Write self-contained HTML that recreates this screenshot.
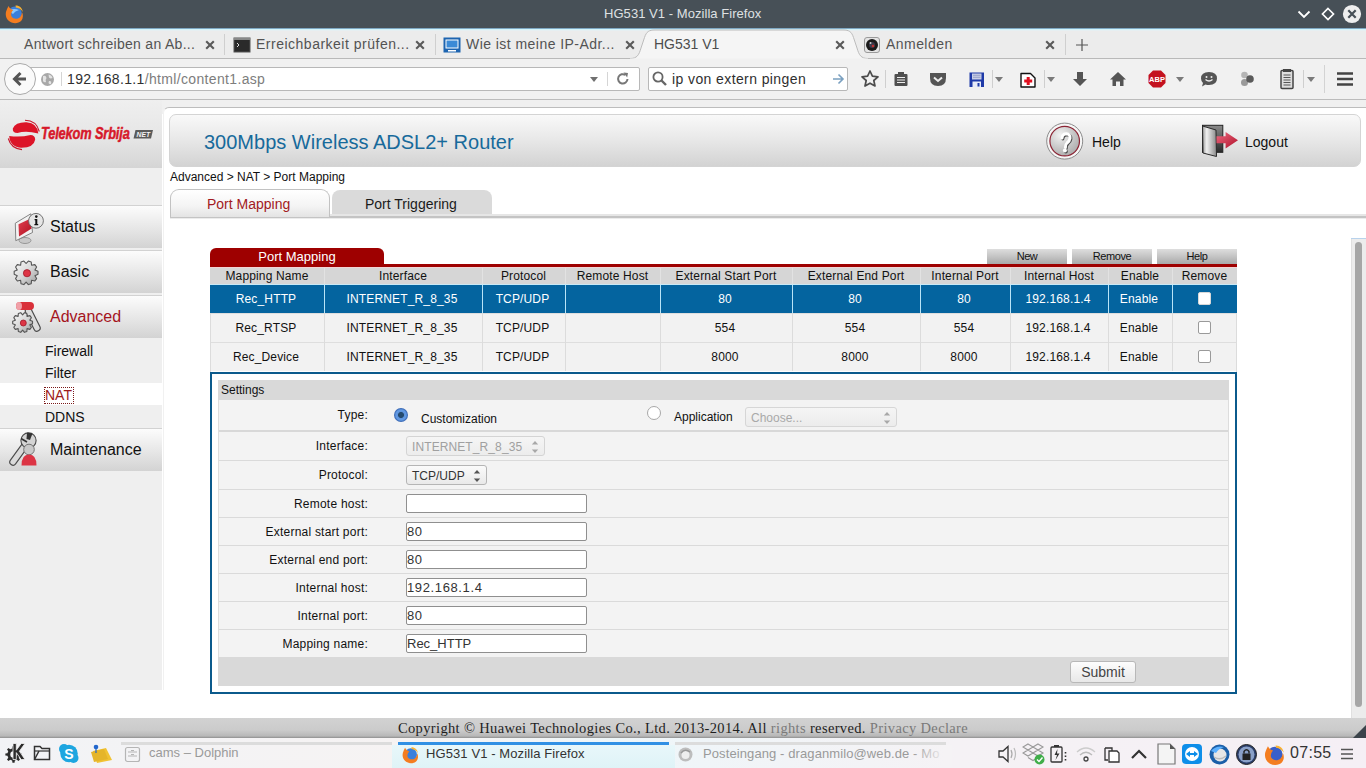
<!DOCTYPE html>
<html><head><meta charset="utf-8">
<style>
*{margin:0;padding:0;box-sizing:border-box}
html,body{width:1366px;height:768px;overflow:hidden;background:#fff;font-family:"Liberation Sans",sans-serif;position:relative}
.a{position:absolute}
.t{position:absolute;white-space:nowrap;line-height:1}
/* title bar */
#title{left:0;top:0;width:1366px;height:28px;background:#475057}
#tline{left:0;top:28px;width:1366px;height:3px;background:linear-gradient(#7fa9c4 0,#7fa9c4 33%,#d4f4fa 33%,#d4f4fa 66%,#e6eff2 66%)}
#tabbar{left:0;top:29px;width:1366px;height:29px;background:#ececec}
#tabline{left:0;top:58px;width:1366px;height:1px;background:#b9b9b9}
#navbar{left:0;top:59px;width:1366px;height:40px;background:#f1f1f1}
#navline{left:0;top:99px;width:1366px;height:1px;background:#bcbcbc}
.tabt{font-size:14px;color:#535353;top:37px}
.tabx{font-size:15px;color:#555;top:36px;font-weight:bold}
.sep{width:1px;background:#cfcfcf}
/*css2*/
.nav{left:0;width:162px;height:43px;background:linear-gradient(#fcfcfc,#e6e6e6 55%,#d3d3d3);border-top:1px solid #d2d2d2}
.navt{left:50px;font-size:16px;color:#111}
.subt{left:45px;font-size:14px;color:#111}
.btn{top:249px;width:80px;height:15px;background:linear-gradient(#dedede,#c4c4c4 50%,#a9a9a9)}
.btnt{top:251px;width:80px;text-align:center;font-size:11px;color:#111;letter-spacing:-0.45px}
.th{top:270px;text-align:center;font-size:12px;color:#111;letter-spacing:0.15px}
.td{text-align:center;font-size:12px;letter-spacing:0.15px;margin-left:-1px}
.lbl{right:998px;font-size:12px;color:#111;text-align:right;letter-spacing:0.22px}
.sel{border:1px solid #bbb;border-radius:3px}
.inp{left:406px;width:181px;height:19px;background:#fff;border:1px solid #8f8f8f;border-radius:2px}
.inpt{left:407px;font-size:13px;color:#333}
/*end2*/
</style></head><body>
<!-- ============ TITLE BAR ============ -->
<div class="a" id="title"></div>
<svg class="a" style="left:4px;top:4px" width="20" height="20" viewBox="0 0 20 20">
 <circle cx="10.8" cy="9.6" r="7" fill="#3a7fdc"/>
 <path d="M6 6 Q10 4 15 6 Q11 7 9 10 Q7 9 6 6 Z" fill="#8cc8ff"/>
 <path d="M4.5 2 C5.5 4 7 5.5 9.2 6 C7.2 8 6.6 10.5 7.6 12.6 C9.2 15.2 13.2 15.6 15.7 13.5 C17.2 12 17.9 10 17.9 8 C19.4 10.5 19.3 14.2 17.3 16.7 C14.7 19.6 9.3 20 5.7 17.6 C2.1 15.2 1.2 11 2.1 7.6 C2.7 5.6 3.5 3.6 4.5 2 Z" fill="#f47d20"/>
 <path d="M11.5 1.4 C15.5 1.3 18.3 4 18.9 8 C17.3 5.3 14.7 3.6 11.8 3.4 Z" fill="#f9b233"/>
</svg>
<div class="t" style="left:604px;top:7px;font-size:13px;color:#dfe1e3;letter-spacing:0.05px">HG531 V1 - Mozilla Firefox</div>
<svg class="a" style="left:1296px;top:8px" width="16" height="12" viewBox="0 0 16 12"><path d="M2.5 3.5 L8 9 L13.5 3.5" stroke="#fff" stroke-width="1.8" fill="none"/></svg>
<svg class="a" style="left:1320px;top:6px" width="16" height="16" viewBox="0 0 16 16"><path d="M8 2.5 L13.5 8 L8 13.5 L2.5 8 Z" stroke="#fff" stroke-width="1.7" fill="none"/></svg>
<svg class="a" style="left:1342px;top:4px" width="20" height="20" viewBox="0 0 20 20"><circle cx="10" cy="10" r="9.1" fill="#eeeeee"/><path d="M6.3 6.3 L13.7 13.7 M13.7 6.3 L6.3 13.7" stroke="#475057" stroke-width="2.2"/></svg>

<!-- ============ TAB BAR ============ -->
<div class="a" id="tabbar"></div>
<div class="a" id="tline"></div>
<div class="a" id="tabline"></div>
<div class="t tabt" style="left:24px;letter-spacing:0.3px">Antwort schreiben an Ab...</div>
<svg class="a" style="left:204px;top:39px" width="12" height="12" viewBox="0 0 12 12"><path d="M2.2 2.2 L9.8 9.8 M9.8 2.2 L2.2 9.8" stroke="#5a5a5a" stroke-width="2.1"/></svg>
<div class="a sep" style="left:224px;top:34px;height:21px"></div>
<svg class="a" style="left:233px;top:37px" width="18" height="16" viewBox="0 0 18 16"><rect x="1" y="1" width="16" height="14" fill="#2a2a2a" stroke="#555" stroke-width="1"/><rect x="1" y="1" width="16" height="2" fill="#888"/><path d="M4 6 L6 8 L4 10" stroke="#ddd" stroke-width="1" fill="none"/></svg>
<div class="t tabt" style="left:256px;letter-spacing:0.5px">Erreichbarkeit prüfen...</div>
<svg class="a" style="left:414px;top:39px" width="12" height="12" viewBox="0 0 12 12"><path d="M2.2 2.2 L9.8 9.8 M9.8 2.2 L2.2 9.8" stroke="#5a5a5a" stroke-width="2.1"/></svg>
<div class="a sep" style="left:435px;top:34px;height:21px"></div>
<svg class="a" style="left:443px;top:37px" width="18" height="16" viewBox="0 0 18 16"><rect x="0.5" y="0.5" width="17" height="15" fill="#1d64b0"/><rect x="2.5" y="2.5" width="13" height="9" fill="#fff"/><rect x="3.5" y="3.5" width="11" height="7" fill="#3b8ad6"/><rect x="5" y="13" width="8" height="1.5" fill="#fff"/></svg>
<div class="t tabt" style="left:466px;letter-spacing:0.45px">Wie ist meine IP-Adr...</div>
<svg class="a" style="left:624px;top:39px" width="12" height="12" viewBox="0 0 12 12"><path d="M2.2 2.2 L9.8 9.8 M9.8 2.2 L2.2 9.8" stroke="#5a5a5a" stroke-width="2.1"/></svg>
<!-- active tab -->
<svg class="a" style="left:630px;top:29px" width="238" height="31" viewBox="0 0 238 31">
 <path d="M0 29.5 C7 29.5 9 26 11 19 L14.5 8.5 C16.5 2.5 19 1 25 1 L213 1 C219 1 221.5 2.5 223.5 8.5 L227 19 C229 26 231 29.5 238 29.5 V31 H0 Z" fill="#f5f5f5" stroke="#bcbcbc" stroke-width="1"/>
 <rect x="0" y="29.5" width="238" height="2" fill="#f1f1f1"/>
</svg>
<div class="t tabt" style="left:654px;color:#4d4d4d;letter-spacing:0px">HG531 V1</div>
<svg class="a" style="left:834px;top:39px" width="12" height="12" viewBox="0 0 12 12"><path d="M2.2 2.2 L9.8 9.8 M9.8 2.2 L2.2 9.8" stroke="#5a5a5a" stroke-width="2.1"/></svg>
<svg class="a" style="left:863px;top:36px" width="18" height="18" viewBox="0 0 18 18"><rect x="1.5" y="1.5" width="15" height="15" rx="2.5" fill="#e4e4e4" stroke="#9a9a9a" stroke-width="1"/><circle cx="9" cy="9" r="6" fill="#1a1a1a"/><circle cx="9" cy="9" r="3" fill="#3a3a4a"/><circle cx="10" cy="10" r="1.3" fill="#c03030"/><circle cx="7.5" cy="7" r="1" fill="#ccc"/></svg>
<div class="t tabt" style="left:886px;letter-spacing:0.45px">Anmelden</div>
<svg class="a" style="left:1044px;top:39px" width="12" height="12" viewBox="0 0 12 12"><path d="M2.2 2.2 L9.8 9.8 M9.8 2.2 L2.2 9.8" stroke="#5a5a5a" stroke-width="2.1"/></svg>
<div class="a sep" style="left:1065px;top:34px;height:21px"></div>
<svg class="a" style="left:1075px;top:38px" width="14" height="14" viewBox="0 0 14 14"><path d="M7 1 V13 M1 7 H13" stroke="#555" stroke-width="1.2"/></svg>

<!-- ============ NAV BAR ============ -->
<div class="a" id="navbar"></div>
<div class="a" id="navline"></div>
<div class="a" style="left:28px;top:67px;width:612px;height:24px;background:#fff;border:1px solid #b8b8b8;border-radius:2px"></div>
<div class="a" style="left:4px;top:63px;width:32px;height:32px;border-radius:50%;background:#fafafa;border:1px solid #a9a9a9"></div>
<svg class="a" style="left:11px;top:70px" width="18" height="18" viewBox="0 0 18 18"><path d="M9.5 3 L3.5 9 L9.5 15 M3.5 9 H15" stroke="#555" stroke-width="3" fill="none" stroke-linejoin="miter"/></svg>
<svg class="a" style="left:40px;top:72px" width="15" height="15" viewBox="0 0 15 15"><circle cx="7.5" cy="7.5" r="6.5" fill="#a8a8a8"/><path d="M3 4 Q6 3 6.5 6 Q5 8 6 10 Q4 11 3 9 Z M8.5 2.5 Q12 3 12.5 6 Q10.5 7 9 5.5 Z M9 9 Q12 8.5 11 12 Q9 12.5 8.5 11 Z" fill="#e3e3e3"/></svg>
<div class="a sep" style="left:61px;top:72px;height:14px;background:#d5d5d5"></div>
<div class="t" style="left:67px;top:72px;font-size:14px;color:#2f2f2f;letter-spacing:0.34px">192.168.1.1<span style="color:#7d7d7d">/html/content1.asp</span></div>
<svg class="a" style="left:588px;top:74px" width="12" height="10" viewBox="0 0 12 10"><path d="M2 3 L10 3 L6 8 Z" fill="#707070"/></svg>
<div class="a sep" style="left:607px;top:72px;height:14px;background:#d5d5d5"></div>
<svg class="a" style="left:615px;top:71px" width="16" height="16" viewBox="0 0 16 16"><path d="M12.5 8 A4.7 4.7 0 1 1 10.5 4" stroke="#777" stroke-width="2" fill="none"/><path d="M8.5 1.5 L13 2 L12.2 6.5 Z" fill="#777"/></svg>
<!-- search -->
<div class="a" style="left:648px;top:67px;width:200px;height:24px;background:#fff;border:1px solid #b8b8b8;border-radius:2px"></div>
<svg class="a" style="left:651px;top:70px" width="18" height="18" viewBox="0 0 18 18"><circle cx="7" cy="7" r="4.6" stroke="#666" stroke-width="1.8" fill="none"/><path d="M10.5 10.5 L15 15" stroke="#666" stroke-width="2.4"/></svg>
<div class="t" style="left:672px;top:72px;font-size:14px;color:#2f2f2f;letter-spacing:0.4px">ip von extern pingen</div>
<svg class="a" style="left:831px;top:72px" width="14" height="14" viewBox="0 0 14 14"><path d="M2 7 H12 M7.5 2.5 L12 7 L7.5 11.5" stroke="#7aa0c0" stroke-width="1.6" fill="none"/></svg>
<!-- toolbar icons -->
<svg class="a" style="left:860px;top:69px" width="20" height="20" viewBox="0 0 20 20"><path d="M10 2 L12.4 7.2 L18 7.8 L13.8 11.5 L15 17 L10 14.2 L5 17 L6.2 11.5 L2 7.8 L7.6 7.2 Z" stroke="#4c4c4c" stroke-width="1.7" fill="none" stroke-linejoin="round"/></svg>
<div class="a sep" style="left:885px;top:70px;height:18px;background:#cfcfcf"></div>
<svg class="a" style="left:892px;top:70px" width="18" height="18" viewBox="0 0 18 18"><rect x="2.5" y="4" width="13" height="12" rx="1" fill="#4f4f4f"/><rect x="6" y="2" width="6" height="3" fill="#4f4f4f"/><path d="M5 7.5 H13 M5 10 H13 M5 12.5 H13" stroke="#eee" stroke-width="1"/></svg>
<svg class="a" style="left:928px;top:69px" width="20" height="20" viewBox="0 0 20 20"><path d="M2 4 H18 V9 Q18 17 10 17 Q2 17 2 9 Z" fill="#555"/><path d="M6 8.5 L10 12 L14 8.5" stroke="#eee" stroke-width="2" fill="none"/></svg>
<svg class="a" style="left:968px;top:71px" width="18" height="18" viewBox="0 0 18 18"><rect x="1.5" y="1.5" width="14.5" height="14.5" fill="#1f3aa8"/><rect x="4" y="2.5" width="9.5" height="6" fill="#c9cfe6"/><path d="M5 4.3 H12.5 M5 6.3 H12.5" stroke="#8a94c0" stroke-width="0.8"/><rect x="4.5" y="10.5" width="8.5" height="5.5" fill="#e8ecf8"/><rect x="9.5" y="12" width="2" height="3.5" fill="#1f3aa8"/></svg>
<div class="a sep" style="left:992px;top:70px;height:18px;background:#cfcfcf"></div>
<svg class="a" style="left:993px;top:75px" width="12" height="10" viewBox="0 0 12 10"><path d="M2 2 L10 2 L6 7 Z" fill="#7a7a7a"/></svg>
<svg class="a" style="left:1019px;top:71px" width="18" height="18" viewBox="0 0 18 18"><path d="M2 2.5 H11.5 L16 7 V16 H2 Z" fill="#fff" stroke="#111" stroke-width="1.4" stroke-linejoin="round"/><path d="M9.2 6 V14 M5.2 10 H13.2" stroke="#e01020" stroke-width="3"/></svg>
<div class="a sep" style="left:1044px;top:70px;height:18px;background:#cfcfcf"></div>
<svg class="a" style="left:1045px;top:75px" width="12" height="10" viewBox="0 0 12 10"><path d="M2 2 L10 2 L6 7 Z" fill="#7a7a7a"/></svg>
<svg class="a" style="left:1071px;top:70px" width="18" height="18" viewBox="0 0 18 18"><path d="M6 2 H12 V9 H16 L9 16 L2 9 H6 Z" fill="#555"/></svg>
<svg class="a" style="left:1109px;top:70px" width="18" height="18" viewBox="0 0 18 18"><path d="M9 2 L17 9.5 H14.5 V16 H11 V11.5 H7 V16 H3.5 V9.5 H1 Z" fill="#555"/></svg>
<svg class="a" style="left:1147px;top:69px" width="20" height="20" viewBox="0 0 20 20"><path d="M6 1.5 H14 L18.5 6 V14 L14 18.5 H6 L1.5 14 V6 Z" fill="#c4121f"/><text x="10" y="13.3" font-family="Liberation Sans" font-size="7.5" font-weight="bold" fill="#fff" text-anchor="middle">ABP</text></svg>
<svg class="a" style="left:1174px;top:75px" width="12" height="10" viewBox="0 0 12 10"><path d="M2 2 L10 2 L6 7 Z" fill="#7a7a7a"/></svg>
<svg class="a" style="left:1199px;top:69px" width="20" height="20" viewBox="0 0 20 20"><path d="M10 3 Q18 3 18 9.5 Q18 16 10 16 Q8 16 6.5 15.5 L3 17.5 L4 14 Q2 12 2 9.5 Q2 3 10 3 Z" fill="#555"/><path d="M6.5 10.5 Q10 13.5 13.5 10.5" stroke="#eee" stroke-width="1.3" fill="none"/><circle cx="7.5" cy="8" r="1" fill="#eee"/><circle cx="12.5" cy="8" r="1" fill="#eee"/></svg>
<svg class="a" style="left:1237px;top:69px" width="20" height="20" viewBox="0 0 20 20"><circle cx="7.5" cy="6" r="3.3" fill="#b5b5b5"/><circle cx="7.5" cy="13.5" r="3.5" fill="#9a9a9a"/><circle cx="13" cy="10" r="3.8" fill="#5a5a5a"/></svg>
<svg class="a" style="left:1278px;top:68px" width="18" height="22" viewBox="0 0 18 22"><rect x="3" y="2.5" width="12" height="18" rx="1" fill="#ddd" stroke="#444" stroke-width="1.5"/><path d="M5.5 7 H12.5 M5.5 9.5 H12.5 M5.5 12 H12.5 M5.5 14.5 H12.5 M5.5 17 H12.5" stroke="#555" stroke-width="1"/><rect x="5" y="1" width="8" height="3" fill="#444"/></svg>
<div class="a sep" style="left:1303px;top:70px;height:18px;background:#cfcfcf"></div>
<svg class="a" style="left:1305px;top:75px" width="12" height="10" viewBox="0 0 12 10"><path d="M2 2 L10 2 L6 7 Z" fill="#7a7a7a"/></svg>
<div class="a sep" style="left:1324px;top:65px;height:28px;background:#d3d3d3"></div>
<svg class="a" style="left:1335px;top:70px" width="20" height="18" viewBox="0 0 20 18"><path d="M2 3.5 H18 M2 9 H18 M2 14.5 H18" stroke="#444" stroke-width="2.6"/></svg>
<!-- ============ PAGE ============ -->
<!-- sidebar -->
<div class="a" style="left:0;top:100px;width:162px;height:590px;background:#efefef"></div>
<div class="a" style="left:0;top:100px;width:162px;height:68px;background:linear-gradient(#efefef,#e6e6e6 55%,#d5d5d5)"></div>
<!-- logo -->
<svg class="a" style="left:0;top:100px" width="162" height="68" viewBox="0 0 162 68">
 <path d="M38.3 33.5 Q37.5 23 26.5 22.3 Q15.5 22 12.8 28.5 Q12.5 33 17.5 33 Q26 30.5 38.3 33.5 Z" fill="#dc1428"/>
 <path d="M9.2 36 Q10 47 21.5 47.8 Q34 47.5 35.2 39.5 Q35 35 30.5 35 Q20.5 37.5 9.2 36 Z" fill="#dc1428"/>
 <path d="M25 20.3 Q36.5 20.5 39.3 31.5" stroke="#c8142a" stroke-width="1.1" fill="none"/>
 <path d="M8.3 38.5 Q11 48.5 22 49.6" stroke="#c8142a" stroke-width="1.1" fill="none"/>
 <text transform="translate(41,39) scale(0.755,1)" x="0" y="0" font-family="Liberation Sans" font-size="17" font-weight="bold" font-style="italic" fill="#d7182a" stroke="#d7182a" stroke-width="0.5" letter-spacing="-0.2">Telekom Srbija</text>
 <path d="M135.5 30 H153 L151 38.4 H133.5 Z" fill="#5b5b5b"/>
 <text transform="translate(136.5,37) scale(0.85,1)" x="0" y="0" font-family="Liberation Sans" font-size="8" font-weight="bold" font-style="italic" fill="#f4f4f4">NET</text>
</svg>
<!-- nav rows -->
<div class="a nav" style="top:205px"></div>
<div class="a nav" style="top:250px"></div>
<div class="a nav" style="top:295px"></div>
<div class="a nav" style="top:428px"></div>
<div class="a" style="left:0;top:383px;width:162px;height:22px;background:#fff"></div>
<div class="t navt" style="top:219px">Status</div>
<div class="t navt" style="top:264px">Basic</div>
<div class="t navt" style="top:309px;color:#a5141c">Advanced</div>
<div class="t navt" style="top:442px">Maintenance</div>
<div class="t subt" style="top:344px">Firewall</div>
<div class="t subt" style="top:366px">Filter</div>
<div class="t subt" style="top:388px;color:#9d1a1a;outline:1px dotted #7a1a1a;outline-offset:0px;padding:0 1px 1px 0">NAT</div>
<div class="t subt" style="top:410px">DDNS</div>
<!-- nav icons -->
<svg class="a" style="left:12px;top:210px" width="34" height="36" viewBox="0 0 34 36">
 <defs><linearGradient id="scr" x1="0" y1="0" x2="1" y2="1"><stop offset="0" stop-color="#e04050"/><stop offset="1" stop-color="#b01020"/></linearGradient></defs>
 <ellipse cx="13" cy="30.5" rx="6" ry="3" fill="#c8c8c8" stroke="#888" stroke-width="0.8"/>
 <path d="M3.3 13.2 L18.8 3.8 L20.5 22.5 L3.8 30.7 Z" fill="#f2f2f2" stroke="#777" stroke-width="0.9"/>
 <path d="M6.5 14.3 L17.6 9 L19.6 18.4 L7 26.6 Z" fill="url(#scr)"/>
 <circle cx="24" cy="10.8" r="7.4" fill="#e6e6e6" stroke="#666" stroke-width="0.9"/>
 <circle cx="24.3" cy="6.6" r="1.3" fill="#111"/>
 <path d="M22.6 9 H25.3 V14 H26.2 V15.3 H22.4 V14 H23.3 V10.2 H22.6 Z" fill="#111"/>
</svg>
<svg class="a" style="left:10px;top:256px" width="32" height="34" viewBox="0 0 32 34">
 <defs><linearGradient id="gg" x1="0" y1="0" x2="1" y2="1"><stop offset="0" stop-color="#fafafa"/><stop offset="0.5" stop-color="#d8d8d8"/><stop offset="1" stop-color="#9a9a9a"/></linearGradient></defs>
 <path d="M24.94 13.93 L28.01 15.30 L28.01 18.30 L24.94 19.67 L24.94 19.67 L26.62 22.58 L24.85 25.01 L21.57 24.32 L21.57 24.32 L21.21 27.66 L18.35 28.59 L16.10 26.10 L16.10 26.10 L13.85 28.59 L10.99 27.66 L10.63 24.32 L10.63 24.32 L7.35 25.01 L5.58 22.58 L7.26 19.67 L7.26 19.67 L4.19 18.30 L4.19 15.30 L7.26 13.93 L7.26 13.93 L5.58 11.02 L7.35 8.59 L10.63 9.28 L10.63 9.28 L10.99 5.94 L13.85 5.01 L16.10 7.50 L16.10 7.50 L18.35 5.01 L21.21 5.94 L21.57 9.28 L21.57 9.28 L24.85 8.59 L26.62 11.02 L24.94 13.93 Z" fill="url(#gg)" stroke="#555" stroke-width="1.1" stroke-linejoin="round"/>
 <circle cx="17" cy="17.2" r="3.6" fill="#dd3545" stroke="#a01828" stroke-width="0.8"/>
</svg>
<svg class="a" style="left:9px;top:298px" width="34" height="38" viewBox="0 0 34 38">
 <path d="M19.5 13 L28 30" stroke="#4a4a4a" stroke-width="7.5" stroke-linecap="round"/><path d="M19.5 13 L28 30" stroke="#dcdcdc" stroke-width="5.2" stroke-linecap="round"/>
 <rect x="7" y="4" width="18" height="8" rx="4" fill="#d9303a"/>
 <ellipse cx="10" cy="8" rx="3" ry="4" fill="#f0a0a8"/>
 <path d="M20.83 22.15 L23.52 23.25 L23.52 25.75 L20.83 26.85 L20.83 26.85 L22.36 29.32 L20.89 31.35 L18.07 30.65 L18.07 30.65 L17.86 33.55 L15.47 34.32 L13.60 32.10 L13.60 32.10 L11.73 34.32 L9.34 33.55 L9.13 30.65 L9.13 30.65 L6.31 31.35 L4.84 29.32 L6.37 26.85 L6.37 26.85 L3.68 25.75 L3.68 23.25 L6.37 22.15 L6.37 22.15 L4.84 19.68 L6.31 17.65 L9.13 18.35 L9.13 18.35 L9.34 15.45 L11.73 14.68 L13.60 16.90 L13.60 16.90 L15.47 14.68 L17.86 15.45 L18.07 18.35 L18.07 18.35 L20.89 17.65 L22.36 19.68 L20.83 22.15 Z" fill="url(#gg)" stroke="#555" stroke-width="1.1" stroke-linejoin="round"/>
 <circle cx="14.3" cy="25" r="3" fill="#dd3545" stroke="#a01828" stroke-width="0.8"/>
</svg>
<svg class="a" style="left:8px;top:431px" width="34" height="40" viewBox="0 0 34 40">
 <path d="M18 13 L5 31" stroke="#4a4a4a" stroke-width="7.5" stroke-linecap="round"/>
 <path d="M18 13 L5 31" stroke="#dadada" stroke-width="5.2" stroke-linecap="round"/>
 <circle cx="20.5" cy="9.5" r="7.6" fill="#d4d4d4" stroke="#4a4a4a" stroke-width="1.1"/>
 <path d="M19 1.5 L24.5 2.5 L22 9 L18.5 8 Z" fill="#333"/>
 <path d="M13 7.5 L19 11" stroke="#333" stroke-width="1.6"/>
 <circle cx="21" cy="18.5" r="5.3" fill="#c9c9c9" stroke="#6a6a6a" stroke-width="0.9"/>
 <path d="M13.5 34.5 Q13.5 23.5 21 23.5 Q28.5 23.5 28.5 34.5 Z" fill="#dc3444"/>
</svg>
<!-- main frame -->
<div class="a" style="left:162px;top:100px;width:1204px;height:14px;background:#f0f0f0"></div>
<div class="a" style="left:163px;top:107px;width:1220px;height:700px;border:1px solid #f1f1f1;border-top:1.5px solid #bdbdbd;border-radius:6px 0 0 0;background:#fff"></div>
<div class="a" style="left:169px;top:114px;width:1192px;height:53px;border:1px solid #d4d4d4;border-radius:7px;background:linear-gradient(#f9f9f9,#e9e9e9 45%,#d3d3d3)"></div>
<div class="t" style="left:204px;top:132px;font-size:20px;color:#176a9b">300Mbps Wireless ADSL2+ Router</div>
<!-- help icon -->
<svg class="a" style="left:1045px;top:121px" width="40" height="40" viewBox="0 0 40 40">
 <defs><radialGradient id="hg" cx="0.35" cy="0.3" r="0.8"><stop offset="0" stop-color="#f2f2f2"/><stop offset="0.6" stop-color="#c4c4c4"/><stop offset="1" stop-color="#a8a8a8"/></radialGradient></defs>
 <circle cx="19.7" cy="20.1" r="18" fill="#f6f6f6" stroke="#8a8a8a" stroke-width="1"/>
 <circle cx="19.7" cy="20.1" r="14.8" fill="url(#hg)" stroke="#8c2434" stroke-width="1.2"/>
 <path d="M17 17 Q17.5 12.8 21.3 12.8 Q25.5 13.2 25 17.2 Q24.6 20 22 22 Q20.2 23.6 20.4 26.5" stroke="#4a4a4a" stroke-width="3" fill="none" stroke-linecap="round" transform="translate(0.9,0.9)"/>
 <circle cx="20.8" cy="30.4" r="2" fill="#4a4a4a"/>
 <path d="M17 17 Q17.5 12.8 21.3 12.8 Q25.5 13.2 25 17.2 Q24.6 20 22 22 Q20.2 23.6 20.4 26.5" stroke="#ffffff" stroke-width="3" fill="none" stroke-linecap="round"/>
 <circle cx="19.9" cy="29.5" r="2" fill="#ffffff"/>
</svg>
<div class="t" style="left:1092px;top:135px;font-size:14px;color:#111">Help</div>
<!-- logout icon -->
<svg class="a" style="left:1198px;top:121px" width="42" height="40" viewBox="0 0 42 40">
 <defs><linearGradient id="dg" x1="0" x2="1"><stop offset="0" stop-color="#9a9a9a"/><stop offset="0.3" stop-color="#f0f0f0"/><stop offset="1" stop-color="#8a8a8a"/></linearGradient>
 <linearGradient id="fg" x1="0" y1="0" x2="0" y2="1"><stop offset="0" stop-color="#8a8a8a"/><stop offset="1" stop-color="#2a2a2a"/></linearGradient>
 <linearGradient id="ag" x1="0" y1="0" x2="1" y2="1"><stop offset="0" stop-color="#ec6a80"/><stop offset="1" stop-color="#b0102a"/></linearGradient></defs>
 <rect x="4.5" y="4.3" width="20.3" height="27" fill="url(#fg)" stroke="#222" stroke-width="1"/>
 <path d="M4.5 5 L18 9 L18.5 35.5 L5 32 Z" fill="url(#dg)" stroke="#2a2a2a" stroke-width="1"/>
 <path d="M18.5 15.2 H27.6 V11 L40 19.3 L27.6 27.5 V22.3 H18.5 Z" fill="url(#ag)"/>
</svg>
<div class="t" style="left:1245px;top:135px;font-size:14px;color:#111">Logout</div>
<!-- breadcrumb -->
<div class="t" style="left:170px;top:171px;font-size:12px;color:#111">Advanced &gt; NAT &gt; Port Mapping</div>
<!-- tabs -->
<div class="a" style="left:170px;top:214px;width:1196px;height:2px;background:#e6e6e6"></div>
<div class="a" style="left:170px;top:216px;width:1196px;height:2px;background:#c4c4c4"></div>
<div class="a" style="left:170px;top:218px;width:1196px;height:1px;background:#ececec"></div>
<div class="a" style="left:332px;top:190px;width:160px;height:24px;background:#dadada;border-radius:8px 8px 0 0"></div>
<div class="a" style="left:170px;top:189px;width:160px;height:28px;border:1px solid #c2c2c2;border-bottom:none;border-radius:9px 9px 0 0;background:linear-gradient(#ffffff,#f4f4f4 60%,#e4e4e4)"></div>
<div class="t" style="left:207px;top:197px;font-size:14px;color:#a21a22">Port Mapping</div>
<div class="t" style="left:365px;top:197px;font-size:14px;color:#1a1a1a">Port Triggering</div>
<!-- ============ TABLE ============ -->
<div class="a" style="left:210px;top:248px;width:174px;height:18px;background:#9e0000;border-radius:6px 6px 0 0"></div>
<div class="t" style="left:210px;width:174px;text-align:center;top:250px;font-size:13px;color:#fff">Port Mapping</div>
<div class="a btn" style="left:987px"></div><div class="t btnt" style="left:987px">New</div>
<div class="a btn" style="left:1072px"></div><div class="t btnt" style="left:1072px">Remove</div>
<div class="a btn" style="left:1157px"></div><div class="t btnt" style="left:1157px">Help</div>
<div class="a" style="left:210px;top:264px;width:1027px;height:3px;background:#9e0000"></div>
<div class="a" style="left:210px;top:267px;width:1027px;height:17px;background:#d6d6d6"></div>
<div class="a" style="left:210px;top:267px;width:1027px;height:1px;background:#f2d4d4"></div>
<div class="a" style="left:210px;top:284px;width:1027px;height:1px;background:#c9e9f6"></div>
<div class="t th" style="left:210px;width:114px">Mapping Name</div>
<div class="a" style="left:324px;top:268px;width:1px;height:16px;background:#e2e2e2"></div>
<div class="t th" style="left:324px;width:158px">Interface</div>
<div class="a" style="left:482px;top:268px;width:1px;height:16px;background:#e2e2e2"></div>
<div class="t th" style="left:482px;width:83px">Protocol</div>
<div class="a" style="left:565px;top:268px;width:1px;height:16px;background:#e2e2e2"></div>
<div class="t th" style="left:565px;width:95px">Remote Host</div>
<div class="a" style="left:660px;top:268px;width:1px;height:16px;background:#e2e2e2"></div>
<div class="t th" style="left:660px;width:132px">External Start Port</div>
<div class="a" style="left:792px;top:268px;width:1px;height:16px;background:#e2e2e2"></div>
<div class="t th" style="left:792px;width:128px">External End Port</div>
<div class="a" style="left:920px;top:268px;width:1px;height:16px;background:#e2e2e2"></div>
<div class="t th" style="left:920px;width:90px">Internal Port</div>
<div class="a" style="left:1010px;top:268px;width:1px;height:16px;background:#e2e2e2"></div>
<div class="t th" style="left:1010px;width:98px">Internal Host</div>
<div class="a" style="left:1108px;top:268px;width:1px;height:16px;background:#e2e2e2"></div>
<div class="t th" style="left:1108px;width:64px">Enable</div>
<div class="a" style="left:1172px;top:268px;width:1px;height:16px;background:#e2e2e2"></div>
<div class="t th" style="left:1172px;width:65px">Remove</div>
<div class="a" style="left:210px;top:285px;width:1027px;height:28px;background:#04649f"></div>
<div class="t td" style="left:210px;width:114px;top:293px;color:#fff">Rec_HTTP</div>
<div class="a" style="left:324px;top:285px;width:1px;height:28px;background:#b9e4f7"></div>
<div class="t td" style="left:324px;width:158px;top:293px;color:#fff">INTERNET_R_8_35</div>
<div class="a" style="left:482px;top:285px;width:1px;height:28px;background:#b9e4f7"></div>
<div class="t td" style="left:482px;width:83px;top:293px;color:#fff">TCP/UDP</div>
<div class="a" style="left:565px;top:285px;width:1px;height:28px;background:#b9e4f7"></div>
<div class="a" style="left:660px;top:285px;width:1px;height:28px;background:#b9e4f7"></div>
<div class="t td" style="left:660px;width:132px;top:293px;color:#fff">80</div>
<div class="a" style="left:792px;top:285px;width:1px;height:28px;background:#b9e4f7"></div>
<div class="t td" style="left:792px;width:128px;top:293px;color:#fff">80</div>
<div class="a" style="left:920px;top:285px;width:1px;height:28px;background:#b9e4f7"></div>
<div class="t td" style="left:920px;width:90px;top:293px;color:#fff">80</div>
<div class="a" style="left:1010px;top:285px;width:1px;height:28px;background:#b9e4f7"></div>
<div class="t td" style="left:1010px;width:98px;top:293px;color:#fff">192.168.1.4</div>
<div class="a" style="left:1108px;top:285px;width:1px;height:28px;background:#b9e4f7"></div>
<div class="t td" style="left:1108px;width:64px;top:293px;color:#fff">Enable</div>
<div class="a" style="left:1172px;top:285px;width:1px;height:28px;background:#b9e4f7"></div>
<div class="a" style="left:1198px;top:292px;width:13px;height:13px;background:#fff;border-radius:2px;border:1px solid #d8d8d8"></div>
<div class="a" style="left:210px;top:313px;width:1027px;height:29px;background:#f2f2f2"></div>
<div class="a" style="left:210px;top:313px;width:1027px;height:1px;background:#dedede"></div>
<div class="t td" style="left:210px;width:114px;top:322px;color:#111">Rec_RTSP</div>
<div class="a" style="left:324px;top:313px;width:1px;height:29px;background:#dcdcdc"></div>
<div class="t td" style="left:324px;width:158px;top:322px;color:#111">INTERNET_R_8_35</div>
<div class="a" style="left:482px;top:313px;width:1px;height:29px;background:#dcdcdc"></div>
<div class="t td" style="left:482px;width:83px;top:322px;color:#111">TCP/UDP</div>
<div class="a" style="left:565px;top:313px;width:1px;height:29px;background:#dcdcdc"></div>
<div class="a" style="left:660px;top:313px;width:1px;height:29px;background:#dcdcdc"></div>
<div class="t td" style="left:660px;width:132px;top:322px;color:#111">554</div>
<div class="a" style="left:792px;top:313px;width:1px;height:29px;background:#dcdcdc"></div>
<div class="t td" style="left:792px;width:128px;top:322px;color:#111">554</div>
<div class="a" style="left:920px;top:313px;width:1px;height:29px;background:#dcdcdc"></div>
<div class="t td" style="left:920px;width:90px;top:322px;color:#111">554</div>
<div class="a" style="left:1010px;top:313px;width:1px;height:29px;background:#dcdcdc"></div>
<div class="t td" style="left:1010px;width:98px;top:322px;color:#111">192.168.1.4</div>
<div class="a" style="left:1108px;top:313px;width:1px;height:29px;background:#dcdcdc"></div>
<div class="t td" style="left:1108px;width:64px;top:322px;color:#111">Enable</div>
<div class="a" style="left:1172px;top:313px;width:1px;height:29px;background:#dcdcdc"></div>
<div class="a" style="left:1198px;top:321px;width:13px;height:13px;background:#fff;border-radius:2px;border:1px solid #9a9a9a"></div>
<div class="a" style="left:210px;top:342px;width:1027px;height:29px;background:#f2f2f2"></div>
<div class="a" style="left:210px;top:342px;width:1027px;height:1px;background:#dedede"></div>
<div class="t td" style="left:210px;width:114px;top:351px;color:#111">Rec_Device</div>
<div class="a" style="left:324px;top:342px;width:1px;height:29px;background:#dcdcdc"></div>
<div class="t td" style="left:324px;width:158px;top:351px;color:#111">INTERNET_R_8_35</div>
<div class="a" style="left:482px;top:342px;width:1px;height:29px;background:#dcdcdc"></div>
<div class="t td" style="left:482px;width:83px;top:351px;color:#111">TCP/UDP</div>
<div class="a" style="left:565px;top:342px;width:1px;height:29px;background:#dcdcdc"></div>
<div class="a" style="left:660px;top:342px;width:1px;height:29px;background:#dcdcdc"></div>
<div class="t td" style="left:660px;width:132px;top:351px;color:#111">8000</div>
<div class="a" style="left:792px;top:342px;width:1px;height:29px;background:#dcdcdc"></div>
<div class="t td" style="left:792px;width:128px;top:351px;color:#111">8000</div>
<div class="a" style="left:920px;top:342px;width:1px;height:29px;background:#dcdcdc"></div>
<div class="t td" style="left:920px;width:90px;top:351px;color:#111">8000</div>
<div class="a" style="left:1010px;top:342px;width:1px;height:29px;background:#dcdcdc"></div>
<div class="t td" style="left:1010px;width:98px;top:351px;color:#111">192.168.1.4</div>
<div class="a" style="left:1108px;top:342px;width:1px;height:29px;background:#dcdcdc"></div>
<div class="t td" style="left:1108px;width:64px;top:351px;color:#111">Enable</div>
<div class="a" style="left:1172px;top:342px;width:1px;height:29px;background:#dcdcdc"></div>
<div class="a" style="left:1198px;top:350px;width:13px;height:13px;background:#fff;border-radius:2px;border:1px solid #9a9a9a"></div>
<div class="a" style="left:210px;top:313px;width:1px;height:59px;background:#dcdcdc"></div>
<div class="a" style="left:1236px;top:313px;width:1px;height:59px;background:#dcdcdc"></div>
<!-- ============ SETTINGS ============ -->
<div class="a" style="left:210px;top:372px;width:1027px;height:322px;border:2px solid #0b5a8c;background:#fff"></div>
<div class="a" style="left:218px;top:380px;width:1011px;height:20px;background:#d9d9d9"></div>
<div class="t" style="left:221px;top:384px;font-size:12px;color:#111">Settings</div>
<div class="a" style="left:218px;top:400px;width:1011px;height:257px;background:#f3f3f3;border-left:1px solid #dddddd;border-right:1px solid #dddddd"></div>
<div class="a" style="left:218px;top:657px;width:1011px;height:29px;background:#d9d9d9"></div>
<div class="a" style="left:219px;top:430px;width:1009px;height:2px;background:#d8d8d8"></div>
<div class="a" style="left:219px;top:460px;width:1009px;height:1px;background:#dadada"></div>
<div class="a" style="left:219px;top:489px;width:1009px;height:1px;background:#dadada"></div>
<div class="a" style="left:219px;top:517px;width:1009px;height:1px;background:#dadada"></div>
<div class="a" style="left:219px;top:545px;width:1009px;height:1px;background:#dadada"></div>
<div class="a" style="left:219px;top:573px;width:1009px;height:1px;background:#dadada"></div>
<div class="a" style="left:219px;top:601px;width:1009px;height:1px;background:#dadada"></div>
<div class="a" style="left:219px;top:629px;width:1009px;height:1px;background:#dadada"></div>
<div class="t lbl" style="top:409px">Type:</div>
<div class="t lbl" style="top:440px">Interface:</div>
<div class="t lbl" style="top:469px">Protocol:</div>
<div class="t lbl" style="top:498px">Remote host:</div>
<div class="t lbl" style="top:526px">External start port:</div>
<div class="t lbl" style="top:554px">External end port:</div>
<div class="t lbl" style="top:582px">Internal host:</div>
<div class="t lbl" style="top:610px">Internal port:</div>
<div class="t lbl" style="top:638px">Mapping name:</div>
<div class="a" style="left:394px;top:408px;width:14px;height:14px;border-radius:50%;background:radial-gradient(circle,#244a6e 0,#244a6e 2.6px,#5b91db 3.4px,#629be4 5px,#3d6cb8 6.5px,#3d6cb8 7px)"></div>
<div class="t" style="left:421px;top:413px;font-size:12px;color:#111">Customization</div>
<div class="a" style="left:647px;top:406px;width:14px;height:14px;border-radius:50%;background:#fff;border:1px solid #a8a8a8"></div>
<div class="t" style="left:674px;top:411px;font-size:12px;color:#111">Application</div>
<div class="a sel" style="left:745px;top:407px;width:152px;height:20px;border-color:#d6d6d6;background:linear-gradient(#f5f5f5,#ececec)"></div>
<div class="t" style="left:751px;top:412px;font-size:12px;color:#a9a9a9">Choose...</div>
<svg class="a" style="left:882px;top:410px" width="10" height="16" viewBox="0 0 10 16"><path d="M1.8 5.5 L5 2 L8.2 5.5 Z M1.8 10.5 L5 14 L8.2 10.5 Z" fill="#a8a8a8"/></svg>
<div class="a sel" style="left:406px;top:436px;width:139px;height:20px;border-color:#d4d4d4;background:linear-gradient(#f5f5f5,#ececec)"></div>
<div class="t" style="left:412px;top:441px;font-size:12px;color:#a0a0a0;letter-spacing:0.1px">INTERNET_R_8_35</div>
<svg class="a" style="left:530px;top:439px" width="10" height="16" viewBox="0 0 10 16"><path d="M1.8 5.5 L5 2 L8.2 5.5 Z M1.8 10.5 L5 14 L8.2 10.5 Z" fill="#a8a8a8"/></svg>
<div class="a sel" style="left:406px;top:465px;width:81px;height:20px;border-color:#b5b5b5;background:linear-gradient(#fbfbfb,#e9e9e9)"></div>
<div class="t" style="left:412px;top:470px;font-size:12px;color:#333">TCP/UDP</div>
<svg class="a" style="left:472px;top:468px" width="10" height="16" viewBox="0 0 10 16"><path d="M1.8 5.5 L5 2 L8.2 5.5 Z M1.8 10.5 L5 14 L8.2 10.5 Z" fill="#555"/></svg>
<div class="a inp" style="top:494px"></div>
<div class="a inp" style="top:522px"></div>
<div class="t inpt" style="top:525px;letter-spacing:0.6px">80</div>
<div class="a inp" style="top:550px"></div>
<div class="t inpt" style="top:553px;letter-spacing:0.6px">80</div>
<div class="a inp" style="top:578px"></div>
<div class="t inpt" style="top:581px;letter-spacing:0.62px">192.168.1.4</div>
<div class="a inp" style="top:606px"></div>
<div class="t inpt" style="top:609px;letter-spacing:0.6px">80</div>
<div class="a inp" style="top:634px"></div>
<div class="t inpt" style="top:637px;letter-spacing:0px">Rec_HTTP</div>
<div class="a" style="left:1070px;top:661px;width:66px;height:22px;border:1px solid #b8b8b8;border-radius:3px;background:linear-gradient(#fdfdfd,#e8e8e8)"></div>
<div class="t" style="left:1070px;width:66px;text-align:center;top:665px;font-size:14px;color:#444">Submit</div>
<!-- ============ FOOTER ============ -->
<div class="a" style="left:0;top:690px;width:1366px;height:28px;background:#fff"></div>
<div class="a" style="left:210px;top:690px;width:1027px;height:4px;border:2px solid #0b5a8c;border-top:none"></div>
<!-- scrollbar -->
<div class="a" style="left:1351px;top:238px;width:15px;height:480px;background:#ececec;border-left:1px solid #e0e0e0"></div>
<div class="a" style="left:1351px;top:238px;width:15px;height:1px;background:#b8d2ec"></div>
<div class="a" style="left:1355px;top:242px;width:7px;height:465px;background:#a6a6a6;border-radius:3.5px"></div>
<div class="a" style="left:0;top:718px;width:1366px;height:20px;background:linear-gradient(#d2d2d2,#cbcbcb 60%,#b8b8b8 90%,#8f8f8f)"></div>
<div class="t" style="left:398px;top:721px;font-size:14.5px;font-family:'Liberation Serif',serif;color:#1e1e1e;letter-spacing:0.35px">Copyright © Huawei Technologies Co., Ltd. 2013-2014. All <span style="color:#7a7a7a">rights</span> reserved. <span style="color:#7a7a7a">Privacy Declare</span></div>
<svg class="a" style="left:1350px;top:722px" width="16" height="16" viewBox="0 0 16 16"><path d="M16 3 L16 16 L3 16 Z" fill="#3b434a"/></svg>
<!-- ============ TASKBAR ============ -->
<div class="a" style="left:0;top:738px;width:1366px;height:30px;background:linear-gradient(90deg,#f2f3f6 0%,#f6f3f3 30%,#eef6f9 45%,#f5f2f5 70%,#f5eff5 100%)"></div>
<!-- KDE logo -->
<svg class="a" style="left:4px;top:742px" width="22" height="22" viewBox="0 0 22 22">
 <path d="M15.55 11.15 L17.63 11.44 L17.63 13.56 L15.55 13.85 L14.74 15.82 L16.00 17.50 L14.50 19.00 L12.82 17.74 L10.85 18.55 L10.56 20.63 L8.44 20.63 L8.15 18.55 L6.18 17.74 L4.50 19.00 L3.00 17.50 L4.26 15.82 L3.45 13.85 L1.37 13.56 L1.37 11.44 L3.45 11.15 L4.26 9.18 L3.00 7.50 L4.50 6.00 L6.18 7.26 L8.15 6.45 L8.44 4.37 L10.56 4.37 L10.85 6.45 L12.82 7.26 L14.50 6.00 L16.00 7.50 L14.74 9.18 Z" fill="#2b2b2b"/>
 <circle cx="9.5" cy="12.5" r="3.2" fill="#f2f2f4"/>
 <path d="M9 1.5 H12.3 V8.2 L17.2 1.5 H21 L15.4 9.2 L21 17.5 H17.2 L12.3 10.6 V17.5 H9 Z" fill="#2b2b2b" stroke="#f2f2f4" stroke-width="0.8"/>
</svg>
<svg class="a" style="left:33px;top:745px" width="18" height="16" viewBox="0 0 18 16"><path d="M1.5 1.5 H7 L9 3.5 H16.5 V14.5 H1.5 Z" fill="none" stroke="#333" stroke-width="1.5"/><path d="M1.5 6 H16.5" stroke="#333" stroke-width="1.2"/><path d="M1.5 14.5 L6 6" stroke="#333" stroke-width="1.5"/></svg>
<svg class="a" style="left:58px;top:743px" width="22" height="21" viewBox="0 0 22 21"><circle cx="6" cy="6" r="5" fill="#1ea6e0"/><circle cx="15.5" cy="15" r="5" fill="#1ea6e0"/><circle cx="11" cy="10.5" r="8.7" fill="#1ea6e0"/><text x="11" y="15.5" font-family="Liberation Sans" font-size="14" font-weight="bold" fill="#fff" text-anchor="middle">S</text></svg>
<svg class="a" style="left:89px;top:743px" width="25" height="21" viewBox="0 0 25 21"><path d="M4 8 L17 5 L23 17 L8 20 Z" fill="#f1c232"/><path d="M2 9 L15 6 L19 16 L5 19 Z" fill="#e5b52a"/><circle cx="7" cy="4" r="2.3" fill="#2266cc"/><path d="M7 5 V10" stroke="#2266cc" stroke-width="1.2"/></svg>
<!-- tasks -->
<div class="a" style="left:121px;top:742px;width:271px;height:3px;background:#dcdcdc"></div>
<svg class="a" style="left:124px;top:746px" width="17" height="17" viewBox="0 0 17 17"><rect x="1.5" y="1.5" width="14" height="14" rx="2" fill="none" stroke="#b5b5b5" stroke-width="1.2"/><path d="M4 6 H13 M4 10 H13 M7 4.5 H10 M7 8.5 H10" stroke="#b5b5b5" stroke-width="1"/></svg>
<div class="t" style="left:149px;top:746px;font-size:13px;color:#9a9a9a;letter-spacing:0px">cams – Dolphin</div>
<div class="a" style="left:392px;top:745px;width:283px;height:23px;background:linear-gradient(#e8f7fa,#dff3f7)"></div>
<div class="a" style="left:398px;top:742px;width:271px;height:3px;background:#3190e4"></div>
<svg class="a" style="left:401px;top:746px" width="18" height="18" viewBox="0 0 20 20">
 <circle cx="10.8" cy="9.6" r="7" fill="#3a7fdc"/>
 <path d="M4.5 2 C5.5 4 7 5.5 9.2 6 C7.2 8 6.6 10.5 7.6 12.6 C9.2 15.2 13.2 15.6 15.7 13.5 C17.2 12 17.9 10 17.9 8 C19.4 10.5 19.3 14.2 17.3 16.7 C14.7 19.6 9.3 20 5.7 17.6 C2.1 15.2 1.2 11 2.1 7.6 C2.7 5.6 3.5 3.6 4.5 2 Z" fill="#f47d20"/>
 <path d="M11.5 1.4 C15.5 1.3 18.3 4 18.9 8 C17.3 5.3 14.7 3.6 11.8 3.4 Z" fill="#f9b233"/>
</svg>
<div class="t" style="left:426px;top:747px;font-size:13px;color:#333;letter-spacing:0.1px">HG531 V1 - Mozilla Firefox</div>
<div class="a" style="left:675px;top:742px;width:271px;height:3px;background:#dcdcdc"></div>
<svg class="a" style="left:677px;top:746px" width="17" height="17" viewBox="0 0 17 17"><circle cx="8.5" cy="8.5" r="7" fill="#bdbdbd"/><circle cx="8.5" cy="9" r="4" fill="#eee"/><path d="M4 7 Q8 2 13 6" stroke="#999" stroke-width="1.5" fill="none"/></svg>
<div class="t" style="left:703px;top:747px;font-size:13px;color:#9a9a9a;letter-spacing:0.1px">Posteingang - draganmilo@web.de - Mo</div>
<div class="a" style="left:912px;top:745px;width:40px;height:22px;background:linear-gradient(90deg,rgba(245,243,245,0),#f5f3f5 85%)"></div>
<!-- tray -->
<svg class="a" style="left:997px;top:744px" width="24" height="20" viewBox="0 0 24 20"><path d="M2 7 H6 L11 2.5 V17.5 L6 13 H2 Z" fill="none" stroke="#333" stroke-width="1.3"/><path d="M14 6 Q16 10 14 14" stroke="#aaa" stroke-width="1.2" fill="none"/><path d="M17 4 Q20 10 17 16" stroke="#bbb" stroke-width="1.2" fill="none"/></svg>
<svg class="a" style="left:1022px;top:742px" width="24" height="24" viewBox="0 0 24 24"><path d="M6 2 L11 5 L6 8 L1 5 Z M16 2 L21 5 L16 8 L11 5 Z M6 8 L11 11 L6 14 L1 11 Z M16 8 L21 11 L16 14 L11 11 Z M6 15.5 L11 18.5 L16 15.5" fill="none" stroke="#999" stroke-width="1.1"/><circle cx="17.5" cy="17.5" r="5" fill="#3fae49"/><path d="M15 17.5 L17 19.5 L20.5 15.5" stroke="#fff" stroke-width="1.4" fill="none"/></svg>
<svg class="a" style="left:1049px;top:744px" width="22" height="20" viewBox="0 0 22 20"><rect x="2" y="3" width="11" height="15" rx="1" fill="none" stroke="#333" stroke-width="1.3"/><rect x="5" y="1" width="5" height="2" fill="#333"/><path d="M8.5 5 L5.5 11 H8 L6.5 16 L10.5 9.5 H8 Z" fill="#333"/><path d="M16.5 8 V9.5 M16.5 11.5 V13 M16.5 15 V16.5" stroke="#333" stroke-width="1.6"/></svg>
<svg class="a" style="left:1075px;top:745px" width="22" height="18" viewBox="0 0 22 18"><path d="M2 7 Q11 -1 20 7" stroke="#ccc" stroke-width="1.3" fill="none"/><path d="M5 10 Q11 4.5 17 10" stroke="#bbb" stroke-width="1.3" fill="none"/><circle cx="11" cy="14" r="2" fill="none" stroke="#444" stroke-width="1.3"/></svg>
<svg class="a" style="left:1102px;top:745px" width="20" height="19" viewBox="0 0 20 19"><path d="M3 3 H10 V6 M3 3 V15 H6" stroke="#333" stroke-width="1.3" fill="none"/><path d="M7 6 H15 L17 8 V17 H7 Z" fill="#fff" stroke="#333" stroke-width="1.3"/></svg>
<svg class="a" style="left:1129px;top:745px" width="20" height="18" viewBox="0 0 20 18"><path d="M3 13 L10 6 L17 13" stroke="#333" stroke-width="2.2" fill="none"/></svg>
<svg class="a" style="left:1155px;top:742px" width="22" height="24" viewBox="0 0 22 24"><path d="M3 2 H15 L20 7 V22 H3 Z" fill="#f4f4f4" stroke="#777" stroke-width="1.2"/><path d="M15 2 L20 7 H15 Z" fill="#555"/></svg>
<svg class="a" style="left:1181px;top:743px" width="24" height="23" viewBox="0 0 24 23"><rect x="1" y="1" width="20" height="20" rx="4" fill="#0e8ee9"/><ellipse cx="11" cy="11" rx="7" ry="7" fill="#fff"/><path d="M5 11 L9 8 V10 H13 V8 L17 11 L13 14 V12 H9 V14 Z" fill="#0e8ee9"/></svg>
<svg class="a" style="left:1208px;top:743px" width="24" height="23" viewBox="0 0 24 23"><circle cx="11.5" cy="11.5" r="10" fill="#1b5fa8"/><circle cx="12" cy="12" r="6.5" fill="#e6e6e6"/><path d="M3 8 Q8 2 16 4 Q10 6 8 10 Z" fill="#5ab0ff"/><path d="M6 14 Q12 18 18 13" stroke="#bbb" stroke-width="1.5" fill="none"/></svg>
<svg class="a" style="left:1235px;top:743px" width="23" height="23" viewBox="0 0 23 23"><circle cx="11.5" cy="11.5" r="10" fill="#2a3d6a" stroke="#222" stroke-width="1"/><circle cx="11.5" cy="11.5" r="8" fill="#8aa0c8"/><rect x="7.5" y="10.5" width="8" height="6.5" fill="#222"/><path d="M9 10.5 V8.5 Q11.5 5 14 8.5 V10.5" stroke="#222" stroke-width="1.4" fill="none"/></svg>
<svg class="a" style="left:1263px;top:744px" width="22" height="22" viewBox="0 0 20 20">
 <circle cx="10.8" cy="9.6" r="7" fill="#3a5fc8"/>
 <path d="M4.5 2 C5.5 4 7 5.5 9.2 6 C7.2 8 6.6 10.5 7.6 12.6 C9.2 15.2 13.2 15.6 15.7 13.5 C17.2 12 17.9 10 17.9 8 C19.4 10.5 19.3 14.2 17.3 16.7 C14.7 19.6 9.3 20 5.7 17.6 C2.1 15.2 1.2 11 2.1 7.6 C2.7 5.6 3.5 3.6 4.5 2 Z" fill="#f47d20"/>
 <path d="M11.5 1.4 C15.5 1.3 18.3 4 18.9 8 C17.3 5.3 14.7 3.6 11.8 3.4 Z" fill="#f9b233"/>
</svg>
<div class="t" style="left:1290px;top:745px;font-size:16px;color:#333;letter-spacing:0.3px">07:55</div>
<svg class="a" style="left:1340px;top:746px" width="14" height="16" viewBox="0 0 14 16"><path d="M1 3.5 H13 M1 8 H13 M1 12.5 H13" stroke="#555" stroke-width="1.4"/></svg>
</body></html>
